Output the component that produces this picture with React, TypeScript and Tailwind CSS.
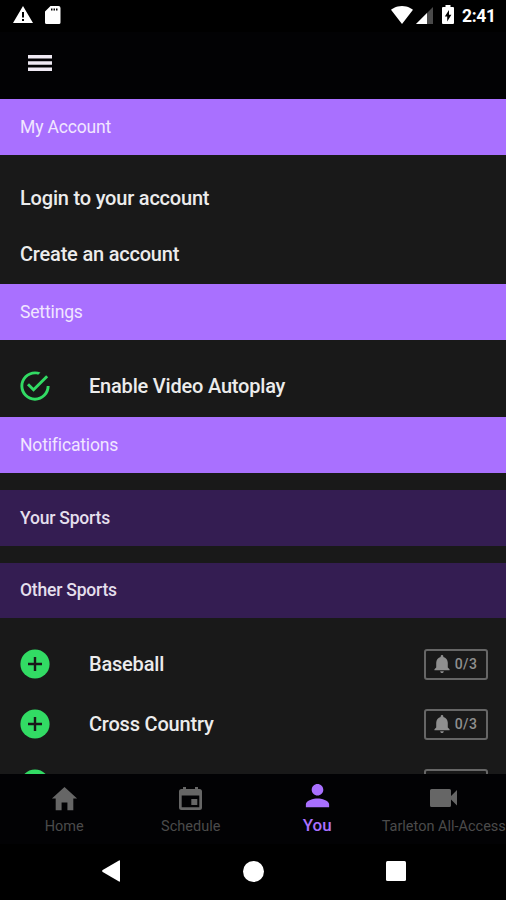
import type { IconType } from "react-icons";
import {
  IoMdCheckmarkCircleOutline,
  IoMdHome,
  IoMdNotifications,
  IoMdPerson,
} from "react-icons/io";

const SPORTS = ["Baseball", "Cross Country", ""];

interface IconProps {
  className?: string;
}

interface Tab {
  label: string;
  icon: IconType | ((props: IconProps) => React.ReactNode);
  active?: boolean;
}

function MenuIcon({ className }: IconProps) {
  return (
    <svg className={className} viewBox="0 0 24 16" fill="currentColor">
      <path d="M0 0h24v3.400H0zM0 6.300h24v3.400H0zM0 12.600h24V16H0z" />
    </svg>
  );
}

function CalendarIcon({ className }: IconProps) {
  return (
    <svg className={className} viewBox="0 0 31 31" fill="currentColor">
      <path
        fillRule="evenodd"
        d="M8 4h3v2h9V4h3v2h1.500Q27 6 27 8.500V24.500Q27 27 24.500 27H6.500Q4 27 4 24.500V8.500Q4 6 6.500 6H8zM6.700 12.500V24.300H24.300V12.500z"
      />
      <path d="M16.300 16h6v6h-6z" />
    </svg>
  );
}

function VideoIcon({ className }: IconProps) {
  return (
    <svg className={className} viewBox="0 0 31 31" fill="currentColor">
      <path d="M3.500 6H21.500Q23 6 23 7.500V13L29 7V22.500L23 16.500V22.500Q23 24 21.500 24H3.500Q2 24 2 22.500V7.500Q2 6 3.500 6z" />
    </svg>
  );
}

function AddIcon({ className }: IconProps) {
  return (
    <svg className={className} viewBox="0 0 36 36">
      <circle cx="18" cy="18" r="14.600" fill="currentColor" />
      <path d="M18 11v14M11 18h14" stroke="#191919" strokeWidth="2.400" />
    </svg>
  );
}

const TABS: Tab[] = [
  { label: "Home", icon: IoMdHome },
  { label: "Schedule", icon: CalendarIcon },
  { label: "You", icon: IoMdPerson, active: true },
  { label: "Tarleton All-Access", icon: VideoIcon },
];

function StatusBar() {
  return (
    <div className="flex h-8 shrink-0 items-start justify-between pl-[13px] pr-[10px] pt-[5px] text-white">
      <div className="flex gap-[12px]">
        <svg className="h-[19px] w-5" viewBox="0 0 20 19" fill="currentColor">
          <path fillRule="evenodd" d="M10 1 20 18H0zM9 7v5.5h2V7zM9 14v2h2v-2z" />
        </svg>
        <svg className="h-[19px] w-4" viewBox="0 0 16 19" fill="currentColor">
          <path
            fillRule="evenodd"
            d="M5.500 1H13.500Q15.500 1 15.500 3V17.500Q15.500 19 14 19H1.500Q0 19 0 17.500V6.500ZM6 3.500V5.500H7.500V3.500ZM8.500 3.500V5.500H10V3.500ZM11 3.500V5.500H12.500V3.500Z"
          />
        </svg>
      </div>
      <div className="flex">
        <svg className="h-[19px] w-[22px]" viewBox="0 0 22 19" fill="currentColor">
          <path d="M11 19 22 4.800C21.500 4.400 17.300 1 11 1S.5 4.400 0 4.800z" />
        </svg>
        <svg className="ml-[3px] h-[19px] w-[17px]" viewBox="0 0 17 19">
          <path d="M0 19 17 2V19z" fill="#4a4a4a" />
          <path d="M0 19 11 8V19z" fill="currentColor" />
        </svg>
        <svg className="ml-[9px] h-[19px] w-3" viewBox="0 0 12 19" fill="currentColor">
          <path
            fillRule="evenodd"
            d="M3.500 0h5v2H11q1 0 1 1v15q0 1-1 1H1q-1 0-1-1V3q0-1 1-1h2.500zM7 5 2.800 11.500h2.400V16.500L9.400 9.800H7z"
          />
        </svg>
        <span className="ml-[8px] mt-[1px] w-[34px] whitespace-nowrap text-[17.500px] font-bold leading-5 tracking-[-0.3px]">
          2:41
        </span>
      </div>
    </div>
  );
}

function SectionHeader({ title }: { title: string }) {
  return (
    <h2 className="flex h-14 shrink-0 items-center bg-[#a970ff] pl-5 text-[17.500px] tracking-[-0.15px] text-[#f1e6ff]">
      {title}
    </h2>
  );
}

function GroupHeader({ title }: { title: string }) {
  return (
    <h3 className="mt-[17px] flex h-[55.500px] shrink-0 items-center bg-[#341d52] pl-5 text-[17.500px] font-medium tracking-[-0.2px] text-[#e4dfec]">
      {title}
    </h3>
  );
}

function SportRow({ name }: { name: string }) {
  return (
    <li className="flex h-[60px] items-center pl-[17px] pr-[18px]">
      <AddIcon className="size-9 text-[#32db64]" />
      <span className="ml-9 flex-1 text-[20px] font-medium tracking-[-0.2px] text-[#ececec]">{name}</span>
      <span className="flex h-[31px] w-16 items-center justify-center gap-[2px] rounded-[3px] border-2 border-[#666] pr-[4px] text-[14px] font-medium tracking-[0.3px] text-[#8f8f8f]">
        <IoMdNotifications className="size-[22px]" />
        {name && "0/3"}
      </span>
    </li>
  );
}

function TabBar() {
  return (
    <nav className="grid h-[70px] shrink-0 grid-cols-4 bg-[#020204]">
      {TABS.map(({ label, icon: Icon, active }) => (
        <div
          key={label}
          className={`flex flex-col items-center whitespace-nowrap pl-0.5 ${
            active ? "pt-[6px] text-[#a970ff]" : "pt-[9px] text-[#666]"
          }`}
        >
          <Icon className="size-[31px] shrink-0" />
          <span
            className={
              active
                ? "mt-[4px] text-[17px] font-medium leading-5"
                : "mt-[3px] text-[14.500px] leading-5 text-[#4b4b4b]"
            }
          >
            {label}
          </span>
        </div>
      ))}
    </nav>
  );
}

function SystemNav() {
  return (
    <div className="flex h-14 shrink-0 items-center bg-black pb-[2px] pl-[102px] text-white">
      <svg className="h-[22px] w-[18px]" viewBox="0 0 18 22" fill="currentColor">
        <path d="M17 .5Q18 0 18 1V21Q18 22 17 21.500L.7 12Q-.5 11 .7 10z" />
      </svg>
      <div className="ml-[123px] size-[21px] rounded-full bg-white" />
      <div className="ml-[122px] size-5 rounded-[1.500px] bg-white" />
    </div>
  );
}

export default function App() {
  return (
    <div className="flex h-[900px] w-[506px] flex-col overflow-hidden bg-black font-['Roboto',sans-serif]">
      <StatusBar />
      <header className="flex h-[67px] shrink-0 items-center bg-[#020204] pb-[5px] pl-7 text-[#f0eaf4]">
        <MenuIcon className="h-4 w-6" />
      </header>

      <main className="flex min-h-0 flex-1 flex-col overflow-hidden bg-[#191919]">
        <SectionHeader title="My Account" />
        <ul className="shrink-0 pb-[2px] pl-5 pt-[15px] text-[20px] font-medium tracking-[-0.2px] text-[#ececec]">
          <li className="flex h-14 items-center">Login to your account</li>
          <li className="flex h-14 items-center">Create an account</li>
        </ul>

        <SectionHeader title="Settings" />
        <div className="flex h-[77px] shrink-0 items-center pl-[17px] pt-[14px]">
          <IoMdCheckmarkCircleOutline className="size-9 text-[#32db64]" />
          <span className="ml-9 text-[20px] font-medium tracking-[-0.2px] text-[#ececec]">
            Enable Video Autoplay
          </span>
        </div>

        <SectionHeader title="Notifications" />
        <GroupHeader title="Your Sports" />
        <GroupHeader title="Other Sports" />
        <ul className="shrink-0 pt-4">
          {SPORTS.map((name) => (
            <SportRow key={name} name={name} />
          ))}
        </ul>
      </main>

      <TabBar />
      <SystemNav />
    </div>
  );
}
